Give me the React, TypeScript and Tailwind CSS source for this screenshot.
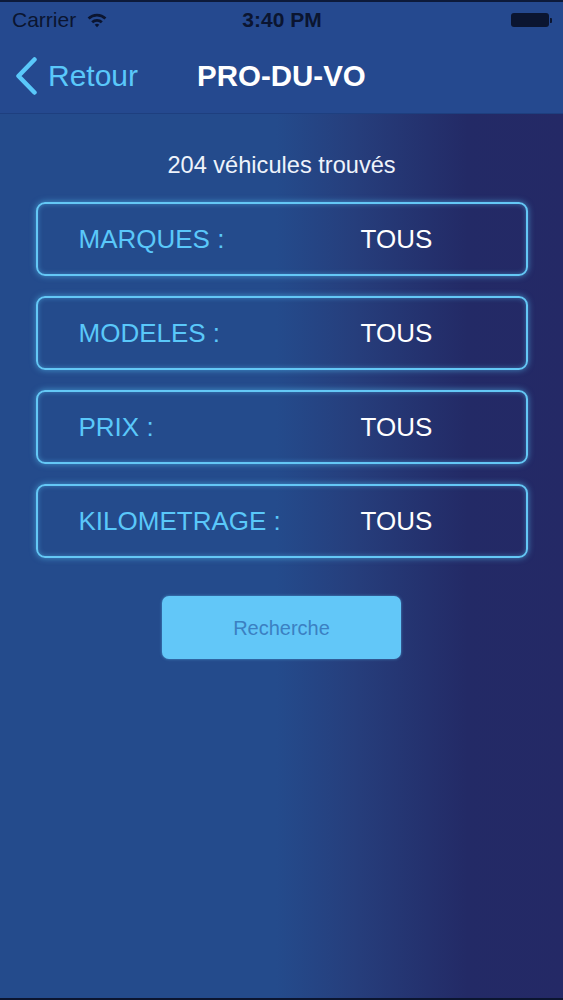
import React from "react";

const filters = [
  { label: "MARQUES :", value: "TOUS" },
  { label: "MODELES :", value: "TOUS" },
  { label: "PRIX :", value: "TOUS" },
  { label: "KILOMETRAGE :", value: "TOUS" },
];

function Wifi() {
  return (
    <svg width="20" height="16" viewBox="0 0 20 16" className="ml-[11px]">
      <path d="M0.6 5.6 A13.4 13.4 0 0 1 19.4 5.6 L17.5 7.6 A10.7 10.7 0 0 0 2.5 7.6 Z" fill="#0b1530" />
      <path d="M4.2 9.2 A8.4 8.4 0 0 1 15.8 9.2 L13.9 11.2 A5.7 5.7 0 0 0 6.1 11.2 Z" fill="#0b1530" />
      <path d="M7.7 12.7 A3.4 3.4 0 0 1 12.3 12.7 L10 15.2 Z" fill="#0b1530" />
    </svg>
  );
}

export default function App() {
  return (
    <div
      className="relative flex h-[1000px] w-[563px] flex-col overflow-hidden bg-[linear-gradient(90deg,#244b8c_0%,#244b8c_49%,#263e7c_63%,#232a66_83%,#242966_100%)]"
      style={{ fontFamily: "'Liberation Sans', Arial, sans-serif" }}
    >
      <div className="h-[2px] bg-[#0d1a3a]" />
      {/* status bar */}
      <div className="flex h-[36px] items-center bg-[#25498f] pl-[12px] pr-[11px] text-[21px] text-[#0b1530]">
        <div className="flex w-[180px] items-center">
          <span>Carrier</span>
          <Wifi />
        </div>
        <div className="flex-1 text-center font-bold">3:40 PM</div>
        <div className="flex w-[180px] justify-end">
          <div className="flex items-center">
            <div className="h-[14px] w-[38px] rounded-[3px] bg-[#0b1530]" />
            <div className="ml-[1px] h-[5px] w-[2px] rounded-r-[1px] bg-[#0b1530]" />
          </div>
        </div>
      </div>
      {/* nav bar */}
      <div className="flex h-[75px] items-center bg-[#25498f] shadow-[0_1px_0_#1e3f7f]">
        <div className="flex w-[180px] items-center pl-[14px]">
          <svg width="24" height="38" viewBox="0 0 24 38">
            <path d="M20.5 2.5 L4.5 19 L20.5 35.5" fill="none" stroke="#5ac8fa" strokeWidth="4.5" strokeLinecap="round" strokeLinejoin="round" />
          </svg>
          <span className="ml-[10px] text-[30px] leading-none text-[#5ac8fa]">Retour</span>
        </div>
        <div className="ml-[17px] text-[29.5px] font-bold leading-none text-white">PRO-DU-VO</div>
      </div>
      {/* content */}
      <div className="flex flex-col items-center">
        <div className="mt-[37px] text-[23.6px] leading-[30px] text-[#eef3fb]">204 véhicules trouvés</div>
        <div className="mt-[22px] flex w-[492px] flex-col gap-[20px]">
          {filters.map((f) => (
            <div
              key={f.label}
              className="flex h-[74px] items-center rounded-[9px] border-2 border-[#64c8f6] shadow-[0_0_6px_rgba(90,200,250,0.6),inset_0_0_5px_rgba(90,200,250,0.45)]"
            >
              <span className="w-[323px] pl-[41px] text-[26px] text-[#5ac8fa]">{f.label}</span>
              <span className="text-[26px] text-white">{f.value}</span>
            </div>
          ))}
        </div>
        <button className="mt-[38px] flex h-[63px] w-[239px] items-center justify-center rounded-[7px] bg-[#62c7f8] text-[20px] text-[#3b80c2] shadow-[0_0_3px_rgba(98,199,248,0.6)]">
          Recherche
        </button>
      </div>
      <div className="absolute bottom-0 left-0 h-[2px] w-full bg-[#0b1530]" />
    </div>
  );
}
